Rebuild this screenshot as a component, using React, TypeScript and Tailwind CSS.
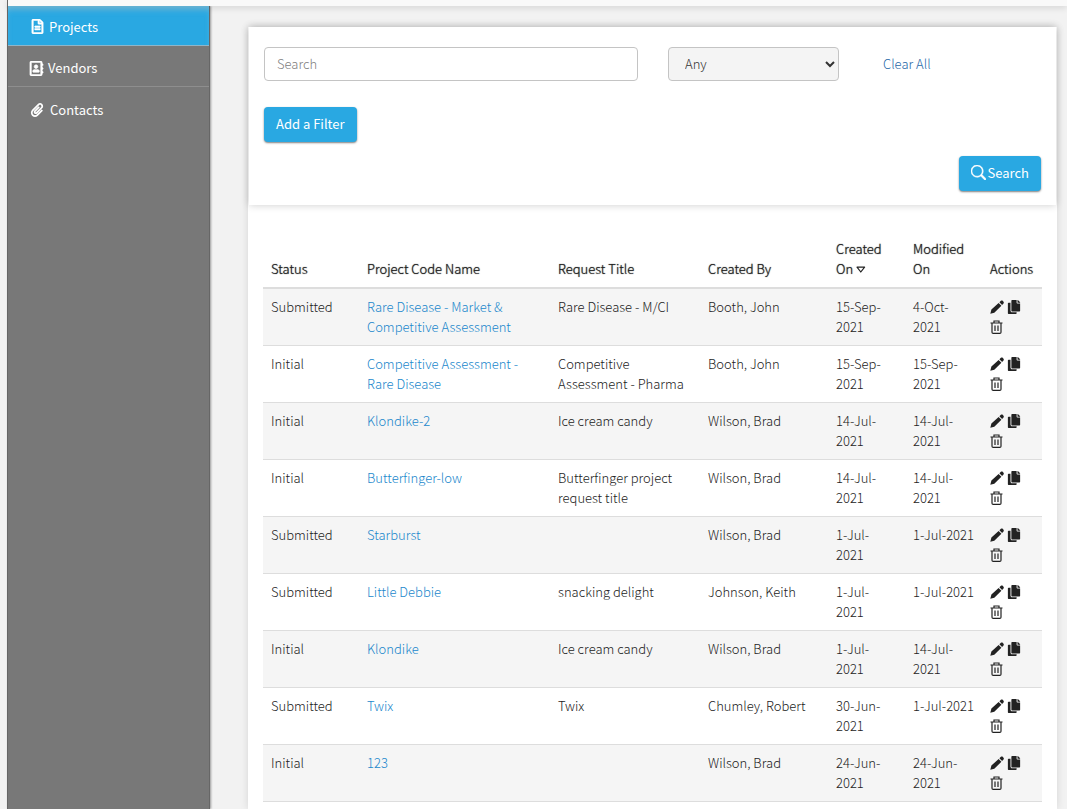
import React, { useState } from 'react';
import { BsSearch } from 'react-icons/bs';
import { FaCopy, FaPaperclip, FaRegAddressBook, FaRegFileAlt } from 'react-icons/fa';

interface Project {
  status: string;
  name: string;
  title: string;
  createdBy: string;
  createdOn: string;
  modifiedOn: string;
}

const PROJECTS: Project[] = [
  { status: 'Submitted', name: 'Rare Disease - Market & Competitive Assessment', title: 'Rare Disease - M/CI', createdBy: 'Booth, John', createdOn: '15-Sep-2021', modifiedOn: '4-Oct-2021' },
  { status: 'Initial', name: 'Competitive Assessment - Rare Disease', title: 'Competitive Assessment - Pharma', createdBy: 'Booth, John', createdOn: '15-Sep-2021', modifiedOn: '15-Sep-2021' },
  { status: 'Initial', name: 'Klondike-2', title: 'Ice cream candy', createdBy: 'Wilson, Brad', createdOn: '14-Jul-2021', modifiedOn: '14-Jul-2021' },
  { status: 'Initial', name: 'Butterfinger-low', title: 'Butterfinger project request title', createdBy: 'Wilson, Brad', createdOn: '14-Jul-2021', modifiedOn: '14-Jul-2021' },
  { status: 'Submitted', name: 'Starburst', title: '', createdBy: 'Wilson, Brad', createdOn: '1-Jul-2021', modifiedOn: '1-Jul-2021' },
  { status: 'Submitted', name: 'Little Debbie', title: 'snacking delight', createdBy: 'Johnson, Keith', createdOn: '1-Jul-2021', modifiedOn: '1-Jul-2021' },
  { status: 'Initial', name: 'Klondike', title: 'Ice cream candy', createdBy: 'Wilson, Brad', createdOn: '1-Jul-2021', modifiedOn: '14-Jul-2021' },
  { status: 'Submitted', name: 'Twix', title: 'Twix', createdBy: 'Chumley, Robert', createdOn: '30-Jun-2021', modifiedOn: '1-Jul-2021' },
  { status: 'Initial', name: '123', title: '', createdBy: 'Wilson, Brad', createdOn: '24-Jun-2021', modifiedOn: '24-Jun-2021' },
];

const TrashIcon: React.FC = () => (
  <svg width="13" height="14" viewBox="0 0 13 14" fill="none" stroke="currentColor" strokeWidth="1.2">
    <path d="M0.5 3h12M4 3V1h5v2M2 3v9.2c0 .7.4 1.2 1.2 1.2h6.6c.8 0 1.2-.5 1.2-1.2V3M5 5.5v5.5M8 5.5v5.5" />
  </svg>
);

const PencilIcon: React.FC = () => (
  <svg width="14" height="14" viewBox="0 0 14 14" fill="currentColor">
    <path d="M0.3 13.7 1.4 9.6 8.6 2.9l2.8 2.9L4.3 12.7zM9.4 2.2l1.5-1.4c.6-.5 1.3-.5 1.8 0l.8.9c.5.6.5 1.2 0 1.7l-1.4 1.6z" />
  </svg>
);

// shows the column the list is sorted by
const SortIcon: React.FC = () => (
  <svg width="10" height="8" viewBox="0 0 10 8" fill="none" stroke="currentColor" strokeWidth="1.2" strokeLinejoin="round" className="inline-block">
    <path d="M1 1.2h7.6L4.8 6z" />
  </svg>
);

const Sidebar: React.FC = () => (
  <nav className="w-[203px] shrink-0 border-x border-[#666] bg-[#787878] text-white shadow-[1px_0_2px_#999]">
    <a href="#projects" className="flex h-10 items-center gap-1 border-b border-[#8fb5c8] bg-[#29a8e2] pl-[22px] pt-[2px] shadow-[inset_0_6px_6px_-3px_rgba(210,225,232,0.5)]">
      <FaRegFileAlt size={15} strokeWidth={20} stroke="currentColor" />
      Projects
    </a>
    <a href="#vendors" className="flex h-[41px] items-center gap-1 border-b border-[#8e8e8e] pl-[21px] pt-1">
      <FaRegAddressBook size={15} strokeWidth={20} stroke="currentColor" />
      Vendors
    </a>
    <a href="#contacts" className="flex h-[41px] items-center gap-[6px] pl-[22px] pt-1">
      <FaPaperclip size={14} />
      Contacts
    </a>
  </nav>
);

const FilterPanel: React.FC = () => {
  const [query, setQuery] = useState('');

  const clearAll = (event: React.MouseEvent) => {
    event.preventDefault();
    setQuery('');
  };

  return (
    <form className="relative mx-px bg-white px-[15px] pb-[14px] pt-5 shadow-[0_0_8px_rgba(0,0,0,0.2)]">
      <div className="flex items-center font-light">
        <input
          type="text"
          aria-label="Search"
          placeholder="Search"
          value={query}
          onChange={(e) => setQuery(e.target.value)}
          className="h-[34px] min-w-0 flex-1 rounded border border-[#c4c4c4] bg-white px-3 pb-[2px] text-[#444] placeholder:text-[#808080]"
        />
        <select
          aria-label="Status"
          className="ml-[30px] h-[34px] w-[171px] rounded border border-[#c4c4c4] bg-[#f4f4f4] pb-[2px] pl-3 text-[#333]"
        >
          <option>Any</option>
          <option>Initial</option>
          <option>Submitted</option>
        </select>
        <a href="#clear" onClick={clearAll} className="ml-11 w-[158px] text-[#1f68a8]">
          Clear All
        </a>
      </div>
      <button
        type="button"
        className="mt-[26px] block h-[35px] rounded bg-[#29a8e2] px-3 pb-[2px] font-normal text-white shadow-[0_1px_2px_rgba(0,0,0,0.5)]"
      >
        Add a Filter
      </button>
      <div className="mt-[14px] flex justify-end">
        <button
          type="button"
          className="flex h-[35px] items-center gap-[2px] rounded bg-[#29a8e2] px-3 pb-[2px] font-normal text-white shadow-[0_1px_2px_rgba(0,0,0,0.5)]"
        >
          <BsSearch size={15} strokeWidth={0.6} />
          Search
        </button>
      </div>
    </form>
  );
};

const RowActions: React.FC = () => (
  <div className="flex w-9 flex-wrap gap-x-[3px]">
    <button type="button" aria-label="Edit" className="flex h-5 items-center">
      <PencilIcon />
    </button>
    <button type="button" aria-label="Copy" className="flex h-5 items-center">
      <FaCopy size={14} />
    </button>
    <button type="button" aria-label="Delete" className="flex h-5 items-center">
      <TrashIcon />
    </button>
  </div>
);

const ProjectTable: React.FC = () => (
  <table className="w-full table-fixed border-separate border-spacing-0 font-light text-[#222]">
    <colgroup>
      <col className="w-[96px]" />
      <col />
      <col className="w-[150px]" />
      <col className="w-[128px]" />
      <col className="w-[77px]" />
      <col className="w-[77px]" />
      <col className="w-[60px]" />
    </colgroup>
    <thead>
      <tr className="text-left align-bottom [text-shadow:0_0_1px_#333] [&>th]:border-b-2 [&>th]:border-[#ddd] [&>th]:p-2 [&>th]:font-light">
        <th>Status</th>
        <th>Project Code Name</th>
        <th>Request Title</th>
        <th>Created By</th>
        <th>
          Created On <SortIcon />
        </th>
        <th>Modified On</th>
        <th>Actions</th>
      </tr>
    </thead>
    <tbody>
      {PROJECTS.map((project) => (
        <tr
          key={project.name}
          className="align-top odd:bg-[#f5f5f5] [&>td]:border-b [&>td]:border-[#ddd] [&>td]:p-2"
        >
          <td>{project.status}</td>
          <td>
            <a href="#project" className="text-[#2187cc]">{project.name}</a>
          </td>
          <td>{project.title}</td>
          <td>{project.createdBy}</td>
          <td>
            <div className="w-14">{project.createdOn}</div>
          </td>
          <td>
            <div className="w-[62px]">{project.modifiedOn}</div>
          </td>
          <td>
            <RowActions />
          </td>
        </tr>
      ))}
    </tbody>
  </table>
);

const App: React.FC = () => {
  return (
    <div className="flex min-h-screen flex-col bg-[#f2f2f2] pl-[7px] font-['Noto_Sans_CJK_SC',sans-serif] text-[13px] leading-5 text-[#333]">
      <header className="relative h-[6px] border-l border-[#666] bg-[#f9f9f9] shadow-[0_2px_6px_rgba(0,0,0,0.12)]" />
      <div className="flex flex-1">
        <Sidebar />
        <main className="ml-[38px] mr-[10px] mt-[21px] min-w-0 flex-1 bg-white shadow-[0_0_8px_rgba(0,0,0,0.12)]">
          <FilterPanel />
          <div className="px-[15px] pt-[26px]">
            <ProjectTable />
          </div>
        </main>
      </div>
    </div>
  );
};

export default App;
